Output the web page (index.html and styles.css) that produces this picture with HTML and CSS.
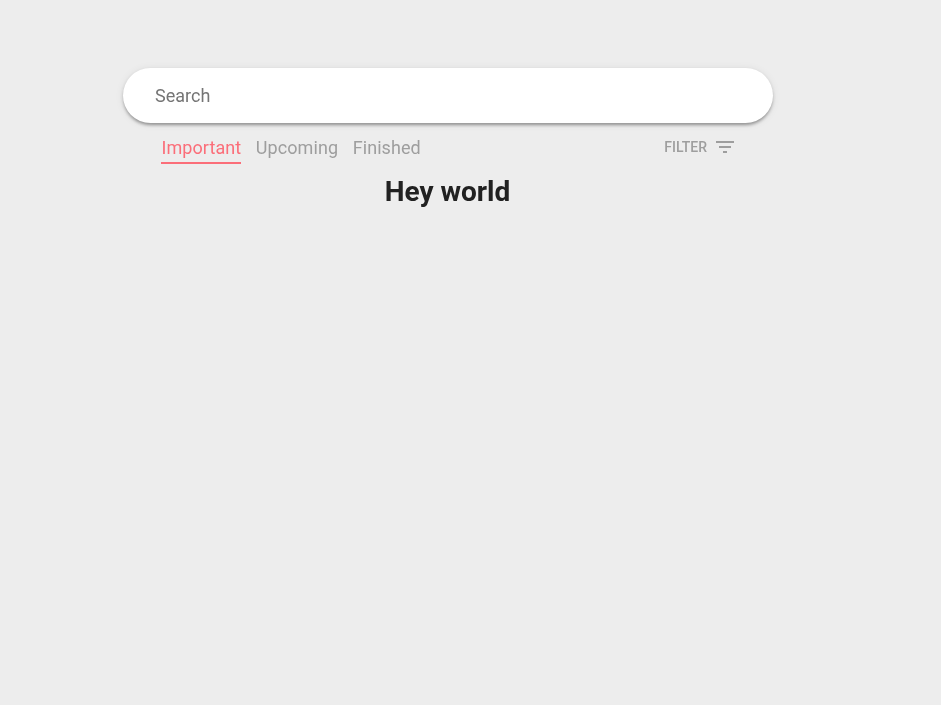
FILE: index.html
```html
<!DOCTYPE html>
<html lang="en">
<head>
<meta charset="utf-8">
<title>Events</title>
<link rel="stylesheet" href="styles.css">
</head>
<body>
<main class="page">
  <input class="search" type="text" placeholder="Search" aria-label="Search">
  <div class="toolbar">
    <nav class="tabs">
      <a class="tab tab-active">Important</a>
      <a class="tab">Upcoming</a>
      <a class="tab">Finished</a>
    </nav>
    <button class="filter" type="button">
      <span>FILTER</span>
      <svg class="filter-icon" viewBox="0 0 24 24" aria-hidden="true"><path d="M10 18h4v-2h-4v2zM3 6v2h18V6H3zm3 7h12v-2H6v2z"/></svg>
    </button>
  </div>
  <h1 class="title">Hey world</h1>
</main>
</body>
</html>
```

FILE: styles.css
```css
* {
  box-sizing: border-box;
}

body {
  margin: 0;
  background: #ededed;
  color: #212121;
  font-family: Roboto, sans-serif;
}

.page {
  width: 650px;
  margin-left: 123px;
  padding-top: 68px;
  will-change: transform;
}

.search {
  display: block;
  width: 100%;
  height: 55px;
  padding: 0 32px;
  border: 0;
  border-radius: 28px;
  background: #fff;
  box-shadow: 0 3px 3px -1px rgba(0, 0, 0, 0.26), 0 2px 4px rgba(0, 0, 0, 0.14), 0 1px 8px rgba(0, 0, 0, 0.08);
  font: 400 18px Roboto, sans-serif;
  outline: none;
}

.search::placeholder {
  color: #757575;
}

.toolbar {
  display: flex;
  justify-content: space-between;
  padding: 12px 36px 0 38px;
}

.tabs {
  display: flex;
  gap: 14px;
}

.tab {
  height: 29px;
  padding-left: 0.5px;
  color: #9e9e9e;
  font-size: 18px;
  letter-spacing: 0.08px;
  line-height: 25px;
}

.tab-active {
  border-bottom: 2px solid #fb6e79;
  color: #fb6e79;
}

.filter {
  display: flex;
  align-items: center;
  gap: 6px;
  height: 24px;
  padding: 0;
  border: 0;
  background: none;
  color: #9e9e9e;
  font: 500 14px Roboto, sans-serif;
}

.filter-icon {
  width: 24px;
  height: 24px;
  fill: currentColor;
}

.title {
  margin: 11px 1px 0 0;
  font-size: 28px;
  font-weight: 700;
  line-height: 33px;
  text-align: center;
}
```
